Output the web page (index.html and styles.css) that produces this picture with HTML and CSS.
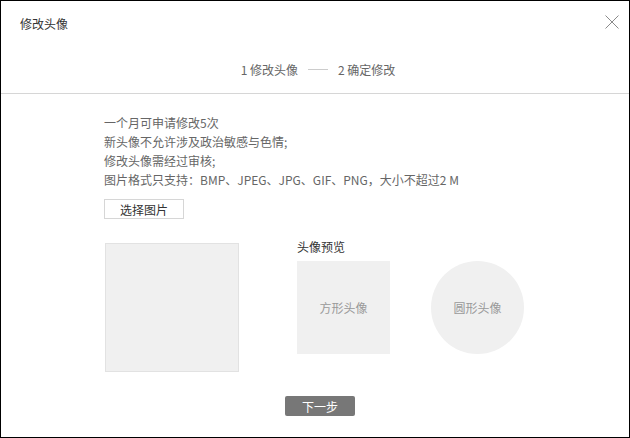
FILE: index.html
```html
<!DOCTYPE html>
<html lang="zh-CN">
<head>
    <meta charset="UTF-8">
    <meta name="viewport" content="width=device-width, initial-scale=1.0">
    <link rel="stylesheet" href="styles.css">
</head>
<body>

<div class="dialog">
    <div class="dialog-head">
        <span class="title">修改头像</span>
        <svg class="close" width="14" height="14" viewBox="0 0 14 14">
            <path d="M0.5 0.5 L13.5 13.5 M13.5 0.5 L0.5 13.5" stroke="#8a8a8a" stroke-width="1" fill="none"/>
        </svg>
    </div>

    <div class="steps">
        <span>1 修改头像</span>
        <span class="dash"></span>
        <span>2 确定修改</span>
    </div>

    <div class="content">
        <ul class="rules">
            <li>一个月可申请修改5次</li>
            <li>新头像不允许涉及政治敏感与色情;</li>
            <li>修改头像需经过审核;</li>
            <li>图片格式只支持：BMP、JPEG、JPG、GIF、PNG，大小不超过2 M</li>
        </ul>
        <button class="pick">选择图片</button>

        <div class="editor">
            <div class="crop"></div>
            <div class="preview">
                <div class="preview-title">头像预览</div>
                <div class="preview-row">
                    <div class="thumb square">方形头像</div>
                    <div class="thumb round">圆形头像</div>
                </div>
            </div>
        </div>
    </div>

    <div class="foot">
        <button class="next">下一步</button>
    </div>
</div>

</body>
</html>
```

FILE: styles.css
```css
body {
    margin: 0;
    font-family: "Noto Sans CJK SC", "Liberation Sans", sans-serif;
    font-size: 12px;
    color: #666;
}
.dialog {
    width: 630px;
    height: 438px;
    box-sizing: border-box;
    border: 1px solid #000;
    background: #fff;
    overflow: hidden;
}
.dialog-head {
    height: 44px;
    display: flex;
    align-items: center;
    justify-content: space-between;
    padding: 0 10px 0 19px;
}
.title {
    color: #333;
    font-size: 12px;
}
.close {
    margin-top: -3px;
}
.steps {
    height: 48px;
    display: flex;
    align-items: center;
    justify-content: center;
    gap: 10px;
    border-bottom: 1px solid #d6d6d6;
    padding-left: 6px;
}
.dash {
    width: 20px;
    height: 1px;
    background: #ccc;
}
.content {
    padding: 19px 0 0 103px;
}
.rules {
    list-style: none;
    margin: 0;
    padding: 0;
    line-height: 19px;
}
.pick {
    display: block;
    margin-top: 10px;
    width: 80px;
    height: 20px;
    padding: 0;
    border: 1px solid #d6d6d6;
    background: #fff;
    font-family: inherit;
    font-size: 12px;
    color: #333;
}
.editor {
    display: flex;
    margin-top: 24px;
    padding-left: 1px;
}
.crop {
    width: 134px;
    height: 129px;
    box-sizing: border-box;
    background: #f0f0f0;
    border: 1px solid #e2e2e2;
}
.preview {
    margin-left: 58px;
}
.preview-title {
    color: #333;
    line-height: 16px;
    margin-top: -4px;
    margin-bottom: 6px;
}
.preview-row {
    display: flex;
    gap: 41px;
}
.thumb {
    width: 93px;
    height: 93px;
    background: #f0f0f0;
    color: #999;
    display: flex;
    align-items: center;
    justify-content: center;
}
.round {
    border-radius: 50%;
}
.foot {
    display: flex;
    justify-content: center;
    padding: 24px 0 0 10px;
}
.next {
    width: 70px;
    height: 20px;
    padding: 0;
    border: none;
    border-radius: 2px;
    background: #777;
    color: #fff;
    font-family: inherit;
    font-size: 12px;
}
```
